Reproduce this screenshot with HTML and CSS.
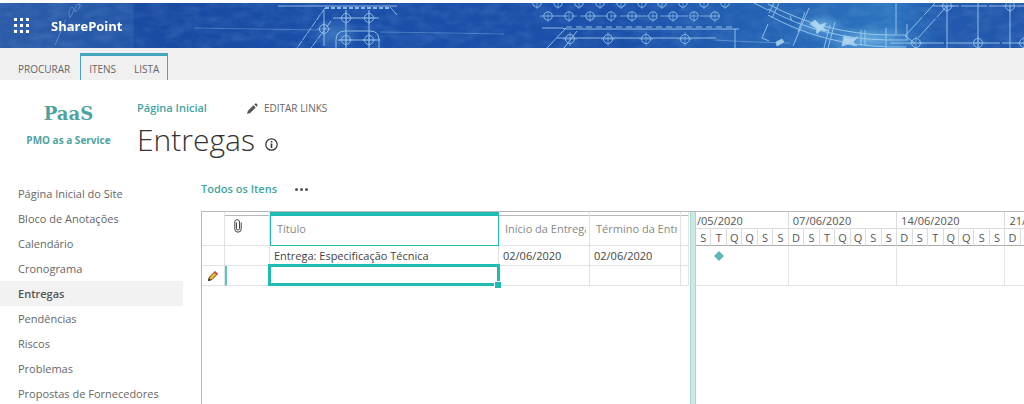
FILE: index.html
```html
<!DOCTYPE html>
<html lang="pt-BR">
<head>
<meta charset="utf-8">
<meta name="viewport" content="width=device-width, initial-scale=1">
<title>Entregas - SharePoint</title>
<link rel="stylesheet" href="styles.css">
</head>
<body>
<header class="suite-bar">
  <svg class="banner" viewBox="0 3 1024 45" preserveAspectRatio="xMinYMin slice" aria-hidden="true">
    <defs>
      <linearGradient id="bg">
        <stop offset="0" stop-color="#2c5ca8"/><stop offset=".13" stop-color="#2557a9"/><stop offset=".131" stop-color="#1a4aa2"/>
        <stop offset=".3" stop-color="#1a4ea8"/><stop offset=".6" stop-color="#1b4fa9"/><stop offset=".75" stop-color="#2463b4"/>
        <stop offset=".87" stop-color="#2c74bf"/><stop offset=".92" stop-color="#2259ae"/><stop offset="1" stop-color="#2256ab"/>
      </linearGradient>
      <radialGradient id="glow"><stop offset="0" stop-color="#7cc0ea" stop-opacity=".7"/><stop offset="1" stop-color="#7cc0ea" stop-opacity="0"/></radialGradient>
      <filter id="paper" x="0" y="0" width="100%" height="100%"><feTurbulence type="fractalNoise" baseFrequency=".06 .12" numOctaves="3" seed="4"/><feColorMatrix values="0 0 0 0 .35  0 0 0 0 .6  0 0 0 0 .85  .9 0 0 0 -.32"/></filter>
      <g id="bolt"><circle r="4.5"/><path d="M0-7V7M-7 0H7" opacity=".6"/></g>
      <g id="stud"><circle r="4.2"/><path d="M0-4V6" opacity=".6"/></g>
    </defs>
    <rect y="3" width="1024" height="45" fill="url(#bg)"/>
    <rect y="3" width="1024" height="45" filter="url(#paper)" opacity=".3"/>
    <ellipse cx="336" cy="34" rx="26" ry="16" fill="url(#glow)" opacity=".5"/>
    <ellipse cx="820" cy="26" rx="26" ry="12" fill="url(#glow)"/>
    <ellipse cx="868" cy="40" rx="50" ry="15" fill="url(#glow)"/>
    <g class="ink">
      <path d="M55 45l11-26M70 18q-3-8 2-11q4 1-2 11M75 12q-1-7 5-8q1 4-5 8" opacity=".45"/>
      <path d="M194 28l62 1M256 29l64 1M380 32l68 1l56 1" opacity=".4"/>
      <path d="M278 6H397M390 7l7 8M336 48v-8q0-9 9-9h25q9 0 9 9v8M346 10v38M369 10v38M333 18h46M338 40h42M324 10v36"/>
      <path d="M325 8l-28 40M331 21l-20 27" stroke-dasharray="7 1"/>
      <path d="M325 8h66" stroke-dasharray="4 2" stroke-width="2"/>
      <use href="#bolt" x="346" y="18"/><use href="#bolt" x="369" y="18"/><use href="#bolt" x="324" y="29"/><use href="#bolt" x="346" y="40"/><use href="#bolt" x="369" y="40"/>
      <use href="#stud" x="537" y="3"/><use href="#stud" x="558" y="3"/><use href="#stud" x="579" y="3"/><use href="#stud" x="600" y="3"/><use href="#stud" x="621" y="3"/><use href="#stud" x="642" y="3"/><use href="#stud" x="662" y="3"/><use href="#stud" x="683" y="3"/><use href="#stud" x="704" y="3"/><use href="#stud" x="725" y="3"/>
      <use href="#stud" x="548" y="16"/><use href="#stud" x="569" y="16"/><use href="#stud" x="590" y="16"/><use href="#stud" x="611" y="16"/><use href="#stud" x="632" y="16"/><use href="#stud" x="653" y="16"/><use href="#stud" x="673" y="16"/><use href="#stud" x="694" y="16"/><use href="#stud" x="715" y="16"/>
      <path d="M540 16H720" stroke-dasharray="28 3 6 3" opacity=".8"/>
      <path d="M542 28H562l4 1H739M735 29v19M566 28l-19 20M577 31l-13 17M557 38H716"/>
      <path d="M566 27H735" stroke-dasharray="6 4"/>
      <use href="#bolt" x="570" y="39"/><use href="#bolt" x="608" y="39"/><use href="#bolt" x="646" y="39"/><use href="#bolt" x="685" y="39"/>
      <path d="M754 3l14 7M768 24l-6 14l7 3M768 4q56 30 120 31h18M768 9q54 30 120 31h20M768 15q54 30 122 32h16"/>
      <path d="M715 40q30 2 75 3" opacity=".5"/>
      <path d="M774 3l-5 10M779 3l-7 15M809 8l-16 38M805 12l-7 20M830 25l-6 23M835 22l-7 26M861 30v16M865 30v16M886 28v20M896 3v31M907 24v16"/>
      <path d="M815 20l5 5l6-2l-3 5l6 3l-8-1l-4 4l-1-6l-6-4zM844 36l7 2l7-1l-5 5l4 4l-9-2l-6 2l1-5zM776 42l6-3l2 3l-7 4zM790 16l2 5" class="spot"/>
      <path d="M905 36l30-33M918 38l29-32M905 36l10 7M933 6h91M890 43h134" stroke-dasharray="26 2"/>
      <path d="M947 6v42M978 3v45M1010 6v42"/>
      <use href="#bolt" x="916" y="43"/><use href="#bolt" x="978" y="43"/><use href="#bolt" x="947" y="6"/><use href="#bolt" x="1010" y="6"/><use href="#bolt" x="1024" y="43"/>
    </g>
  </svg>
  <button class="launcher" type="button" aria-label="Inicializador de aplicativos">
    <svg width="15" height="15" viewBox="0 0 15 15" fill="#fff"><path d="M0 0h3v3H0zM6 0h3v3H6zM12 0h3v3h-3zM0 6h3v3H0zM6 6h3v3H6zM12 6h3v3h-3zM0 12h3v3H0zM6 12h3v3H6zM12 12h3v3h-3z"/></svg>
  </button>
  <a class="brand" href="#">SharePoint</a>
</header>

<nav class="ribbon" aria-label="Faixa de opções">
  <a href="#">PROCURAR</a>
  <div class="tab-group"><a href="#">ITENS</a><a href="#">LISTA</a></div>
</nav>

<div class="title-area">
  <a class="logo" href="#"><span class="logo-name">PaaS</span><span class="logo-sub">PMO as a Service</span></a>
  <div class="title-box">
    <div class="top-links">
      <a class="accent" href="#">Página Inicial</a>
      <button class="edit-links" type="button">
        <svg width="11" height="11" viewBox="0 0 12 12" fill="#555"><path d="M0 12l1-3.500l6-6l2.500 2.500L3.500 11zM8 1.700L9.200.5q.5-.5 1 0l1.300 1.300q.5.500 0 1L10.300 4z"/></svg>
        EDITAR LINKS
      </button>
    </div>
    <div class="heading">
      <h1>Entregas</h1>
      <svg width="13" height="13" viewBox="0 0 13 13" fill="none" stroke="#333" role="img" aria-label="Informações"><circle cx="6.500" cy="6.500" r="5.700" stroke-width="1.200"/><path d="M6.500 5.500V10M6.500 3v1.500" stroke-width="1.600"/></svg>
    </div>
  </div>
</div>

<div class="workspace">
  <nav class="side-nav" aria-label="Navegação do site">
    <a href="#">Página Inicial do Site</a>
    <a href="#">Bloco de Anotações</a>
    <a href="#">Calendário</a>
    <a href="#">Cronograma</a>
    <a class="current" href="#" aria-current="page">Entregas</a>
    <a href="#">Pendências</a>
    <a href="#">Riscos</a>
    <a href="#">Problemas</a>
    <a href="#">Propostas de Fornecedores</a>
  </nav>

  <main class="content">
    <div class="view-bar">
      <a class="accent" href="#">Todos os Itens</a>
      <button class="more" type="button" aria-label="Mais opções"><svg width="13" height="3" viewBox="0 0 13 3" fill="#555"><circle cx="1.500" cy="1.500" r="1.500"/><circle cx="6.500" cy="1.500" r="1.500"/><circle cx="11.500" cy="1.500" r="1.500"/></svg></button>
    </div>
    <div class="gantt-view">
      <div class="grid-pane">
        <table class="grid">
          <colgroup><col class="c-mark"><col class="c-clip"><col class="c-title"><col class="c-date"><col class="c-date"><col class="c-rest"></colgroup>
          <thead>
            <tr>
              <th class="mark"></th>
              <th class="clip"><svg width="8" height="14" viewBox="0 0 8 14" fill="none" stroke="#444" role="img" aria-label="Anexos"><path d="M2.500 3.500V9.500a1.500 1.500 0 0 0 3 0V3A2.300 2.300 0 0 0 .8 3v7a3.200 3.200 0 0 0 6.400 0V3.500"/></svg></th>
              <th class="selected">Título</th>
              <th><span class="label">Início da Entrega</span></th>
              <th><span class="label">Término da Entrega</span></th>
              <th></th>
            </tr>
          </thead>
          <tbody>
            <tr><td></td><td></td><td>Entrega: Especificação Técnica</td><td>02/06/2020</td><td>02/06/2020</td><td></td></tr>
            <tr class="editing">
              <td class="mark"><svg width="10" height="10" viewBox="0 0 10 10" role="img" aria-label="Editando"><path d="M.5 9.500L1.500 6L7 .5L9.500 3L4 8.500z" fill="#e9b93c" stroke="#6b4a20"/><path d="M6 1.500L7.200.4L9.600 2.800L8.500 4z" fill="#c9474f"/><path d="M0 10l.8-3L3 9.200z" fill="#332"/></svg></td>
              <td class="row-focus"></td>
              <td class="active-cell"><input type="text" aria-label="Título"></td><td></td><td></td><td></td>
            </tr>
          </tbody>
        </table>
      </div>
      <div class="splitter" role="separator" aria-orientation="vertical"></div>
      <div class="chart-pane">
        <table class="chart">
          <thead>
            <tr class="weeks"><th colspan="6" class="partial">/05/2020</th><th colspan="7">07/06/2020</th><th colspan="7">14/06/2020</th><th colspan="7">21/06/2020</th></tr>
            <tr class="days"><th>S</th><th>T</th><th>Q</th><th>Q</th><th>S</th><th>S</th><th>D</th><th>S</th><th>T</th><th>Q</th><th>Q</th><th>S</th><th>S</th><th>D</th><th>S</th><th>T</th><th>Q</th><th>Q</th><th>S</th><th>S</th><th>D</th><th>S</th><th>T</th><th>Q</th><th>Q</th><th>S</th><th>S</th></tr>
          </thead>
          <tbody>
            <tr><td class="open"></td><td class="open milestone"><svg width="10" height="10" viewBox="0 0 10 10" role="img" aria-label="Marco 02/06/2020"><path d="M5 0l5 5l-5 5l-5-5z" fill="#5fb5b7"/></svg></td><td colspan="4"></td><td colspan="7"></td><td colspan="7"></td><td colspan="7"></td></tr>
            <tr class="last"><td colspan="6"></td><td colspan="7"></td><td colspan="7"></td><td colspan="7"></td></tr>
          </tbody>
        </table>
      </div>
    </div>
  </main>
</div>
</body>
</html>
```
FILE: styles.css
```css
* { box-sizing: border-box; }

body {
  margin: 0;
  padding-top: 3px;
  min-height: 100vh;
  display: flex;
  flex-direction: column;
  overflow: hidden;
  background: #fff;
  color: #666;
  font: 11px/16px "Open Sans", "Noto Sans", sans-serif;
}

a { color: inherit; text-decoration: none; }

button {
  border: 0;
  padding: 0;
  background: none;
  color: inherit;
  font: inherit;
}

.accent { color: #3fa5a3; font-weight: 600; }

/* Suite bar */
.suite-bar {
  position: relative;
  display: flex;
  align-items: center;
  gap: 22px;
  height: 45px;
  padding-left: 14px;
  overflow: hidden;
  background: #1b4fa9;
}

.banner { position: absolute; inset: 0; width: 100%; height: 100%; }
.ink { fill: none; stroke: #a9d4f2; stroke-width: 1; opacity: .8; }
.spot { fill: #c4e4f6; }
.launcher, .brand { position: relative; }
.launcher { display: flex; }
.brand { color: #fff; font-size: 13px; font-weight: 700; }

/* Ribbon */
.ribbon {
  display: flex;
  align-items: stretch;
  gap: 10px;
  height: 32px;
  padding: 5px 0 0 18px;
  background: #f0f0f0;
  font-size: 10px;
  line-height: 26px;
}

.ribbon > a { padding-top: 3px; }

.tab-group {
  display: flex;
  gap: 18px;
  padding: 0 8px;
  border: solid #45a5bd;
  border-width: 3px 1px 0;
}

/* Title */
.title-area { display: flex; height: 101px; }

.logo {
  display: flex;
  flex-direction: column;
  align-items: center;
  width: 137px;
  padding-top: 22px;
  color: #4fa39e;
  font-weight: 700;
}

.logo-name { font: 700 18px/24px "DejaVu Serif", serif; }
.logo-sub { padding-top: 6px; font-size: 10px; }

.title-box { padding-top: 20px; }
.top-links { display: flex; gap: 40px; }
.edit-links { display: flex; align-items: center; gap: 6px; font-size: 10px; }
.heading { display: flex; align-items: center; gap: 10px; padding-top: 2px; }

h1 {
  margin: 0;
  color: #333;
  font-size: 30px;
  font-weight: 300;
  line-height: 44px;
}

.heading svg { margin-top: 9px; }

/* Workspace */
.workspace { display: flex; flex: 1; gap: 18px; }
.side-nav { flex: none; width: 183px; line-height: 25px; }
.side-nav a { display: block; padding-left: 18px; }
.side-nav .current { background: #f2f2f2; color: #555; font-weight: 600; }

.content { display: flex; flex: 1; flex-direction: column; min-width: 0; }
.view-bar { display: flex; align-items: center; gap: 18px; height: 30px; padding-bottom: 14px; }
.more { display: flex; }

.gantt-view {
  display: flex;
  flex: 1;
  border: solid #b8b8b8;
  border-width: 1px 0 0 1px;
}

table { border-collapse: separate; border-spacing: 0; table-layout: fixed; }
th, td { padding: 0; font-weight: 400; text-align: left; white-space: nowrap; overflow: hidden; }

/* Grid */
.grid-pane { flex: none; width: 488px; }
.grid { width: 487px; }
.c-mark { width: 23px; }
.c-clip { width: 45px; }
.c-title { width: 229px; }
.c-date { width: 91px; }
.c-rest { width: 8px; }

.grid th, .grid td {
  border: solid #e2e2e2;
  border-width: 0 1px 1px 0;
}

.grid th {
  height: 34px;
  padding: 0 3px 0 6px;
  background: linear-gradient(#b8b8b8, #b8b8b8) 0 3px / 100% 1px no-repeat;
  color: #888;
}

.grid .label { display: block; overflow: hidden; }
.grid th.mark { background: none; }
.grid th.clip { padding: 0 0 6px 9px; }
.grid th.clip svg { display: block; }
.grid th.selected { border: solid #1fbcb3; border-width: 4px 1px 1px; padding-bottom: 3px; background: none; }

.grid td {
  height: 20px;
  padding-left: 4px;
  color: #444;
}

.grid td.mark { padding-left: 6px; }
.grid .mark svg { display: block; }
.grid .row-focus { border-left: 2px solid #5cc5c0; }
.grid td.active-cell { position: relative; overflow: visible; padding: 0; }

.active-cell input {
  position: absolute;
  inset: -2px -1px -1px -2px;
  width: 232px;
  border: 3px solid #1fbcb3;
  padding: 0 4px;
  background: #fff;
  font: inherit;
  outline: none;
}

.active-cell::after {
  content: "";
  position: absolute;
  z-index: 1;
  right: -3px;
  bottom: -3px;
  width: 6px;
  height: 6px;
  border: solid #fff;
  border-width: 1px 0 0 1px;
  background: #1fbcb3;
}

.splitter {
  flex: none;
  width: 6px;
  border: solid #a5d9d1;
  border-width: 0 1px;
  background: #cde8e4;
}

/* Chart */
.chart-pane { flex: 1; min-width: 0; overflow: hidden; }
.chart { width: 418px; color: #555; }
.chart th { height: 17px; border-right: 1px solid #dcdcdc; line-height: 15px; }
.weeks th { padding-left: 4px; border-bottom: 1px solid #dcdcdc; }
.weeks .partial { padding-left: 1px; }
.days th { border-bottom: 1px solid #aaa; text-align: center; }
.chart td { height: 20px; border-right: 1px solid #e2e2e2; }
.chart td.open { border-right: 0; }
.chart .last td { border-bottom: 1px solid #e2e2e2; }
.milestone svg { display: block; margin: 0 auto; }
```
